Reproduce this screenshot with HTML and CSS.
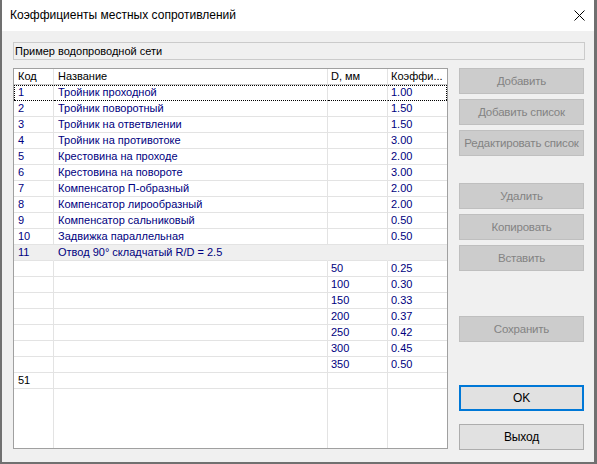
FILE: index.html
```html
<!DOCTYPE html>
<html>
<head>
    <meta charset="utf-8">
    <link rel="stylesheet" href="styles.css">
</head>
<body>
    <div class="window">
        <div class="titlebar">
            <span class="title">Коэффициенты местных сопротивлений</span>
            <svg class="close" width="11" height="11" viewBox="0 0 11 11">
                <path d="M0.5 0.5 L10.5 10.5 M10.5 0.5 L0.5 10.5" stroke="#000" stroke-width="1" fill="none"/>
            </svg>
        </div>
        <div class="content">
            <div class="caption-box">Пример водопроводной сети</div>
            <div class="main">
                <div class="grid">
                    <table>
                        <colgroup>
                            <col class="c-code">
                            <col class="c-name">
                            <col class="c-d">
                            <col class="c-k">
                        </colgroup>
                        <thead>
                            <tr><th>Код</th><th>Название</th><th>D, мм</th><th>Коэффи...</th></tr>
                        </thead>
                        <tbody>
                            <tr class="focus"><td>1</td><td>Тройник проходной</td><td></td><td>1.00</td></tr>
                            <tr><td>2</td><td>Тройник поворотный</td><td></td><td>1.50</td></tr>
                            <tr><td>3</td><td>Тройник на ответвлении</td><td></td><td>1.50</td></tr>
                            <tr><td>4</td><td>Тройник на противотоке</td><td></td><td>3.00</td></tr>
                            <tr><td>5</td><td>Крестовина на проходе</td><td></td><td>2.00</td></tr>
                            <tr><td>6</td><td>Крестовина на повороте</td><td></td><td>3.00</td></tr>
                            <tr><td>7</td><td>Компенсатор П-образный</td><td></td><td>2.00</td></tr>
                            <tr><td>8</td><td>Компенсатор лирообразный</td><td></td><td>2.00</td></tr>
                            <tr><td>9</td><td>Компенсатор сальниковый</td><td></td><td>0.50</td></tr>
                            <tr><td>10</td><td>Задвижка параллельная</td><td></td><td>0.50</td></tr>
                            <tr class="group"><td>11</td><td>Отвод 90° складчатый R/D = 2.5</td><td></td><td></td></tr>
                            <tr><td></td><td></td><td>50</td><td>0.25</td></tr>
                            <tr><td></td><td></td><td>100</td><td>0.30</td></tr>
                            <tr><td></td><td></td><td>150</td><td>0.33</td></tr>
                            <tr><td></td><td></td><td>200</td><td>0.37</td></tr>
                            <tr><td></td><td></td><td>250</td><td>0.42</td></tr>
                            <tr><td></td><td></td><td>300</td><td>0.45</td></tr>
                            <tr><td></td><td></td><td>350</td><td>0.50</td></tr>
                            <tr class="new"><td>51</td><td></td><td></td><td></td></tr>
                            <tr class="filler"><td></td><td></td><td></td><td></td></tr>
                        </tbody>
                    </table>
                </div>
                <div class="buttons">
                    <button class="btn" disabled>Добавить</button>
                    <button class="btn" disabled>Добавить список</button>
                    <button class="btn" disabled>Редактировать список</button>
                    <button class="btn sep-1" disabled>Удалить</button>
                    <button class="btn" disabled>Копировать</button>
                    <button class="btn" disabled>Вставить</button>
                    <button class="btn sep-2" disabled>Сохранить</button>
                    <button class="btn btn-ok">OK</button>
                    <button class="btn btn-exit">Выход</button>
                </div>
            </div>
        </div>
    </div>
</body>
</html>
```

FILE: styles.css
```css
html, body {
    margin: 0;
    padding: 0;
}

body {
    font-family: "Liberation Sans", Arial, sans-serif;
    font-size: 11px;
    color: #000;
    background-color: #707070;
}

.window {
    width: 592px;
    height: 462px;
    border-left: 2px solid #707070;
    border-right: 3px solid #707070;
    border-bottom: 2px solid #707070;
    background-color: #f0f0f0;
    display: flex;
    flex-direction: column;
}

.titlebar {
    height: 31px;
    background-color: #fff;
    display: flex;
    align-items: center;
    justify-content: space-between;
    padding: 0 8px 1px 8px;
    box-sizing: border-box;
}

.title {
    font-size: 12px;
    color: #000;
}

.close {
    margin-right: 1px;
}

.content {
    padding: 11px 9px 0 11px;
}

.caption-box {
    height: 16px;
    line-height: 16px;
    border: 1px solid #cbcbcb;
    background-color: #f0f0f0;
    padding-left: 1px;
    width: 569px;
}

.main {
    display: flex;
    margin-top: 8px;
}

.grid {
    width: 433px;
    height: 379px;
    border: 1px solid #a0a0a0;
    background-color: #fff;
    overflow: hidden;
}

table {
    border-collapse: separate;
    border-spacing: 0;
    table-layout: fixed;
    width: 433px;
    height: 379px;
}

.c-code { width: 40px; }
.c-name { width: 274px; }
.c-d { width: 60px; }
.c-k { width: 59px; }

th, td {
    height: 15px;
    line-height: 15px;
    padding: 0 0 0 4px;
    border-right: 1px solid #e3e3e3;
    border-bottom: 1px solid #e3e3e3;
    text-align: left;
    font-weight: normal;
    white-space: nowrap;
    overflow: hidden;
    color: #000080;
}

th {
    color: #000;
    border-bottom-color: #c8c8c8;
}

th:nth-child(3), td:nth-child(3),
th:nth-child(4), td:nth-child(4) {
    padding-left: 3px;
}

th:last-child, td:last-child {
    border-right: none;
}

tr.focus td {
    position: relative;
    border-bottom: 1px dotted #000;
}

tr.focus td::after {
    content: "";
    position: absolute;
    left: 0;
    right: 0;
    top: 0;
    border-top: 1px dotted #000;
}

tr.focus td:first-child::after {
    bottom: 0;
    border-left: 1px dotted #000;
}

tr.focus td:last-child::after {
    bottom: 0;
    border-right: 1px dotted #000;
}

tr.group td {
    background-color: #efefef;
    border-right-color: #efefef;
}

tr.new td {
    color: #000;
}

tr.filler td {
    height: auto;
    border-bottom: none;
}

.buttons {
    display: flex;
    flex-direction: column;
    margin-left: 11px;
    width: 125px;
}

.btn {
    height: 26px;
    margin: 0 0 5px 0;
    padding: 0;
    font-family: "Liberation Sans", Arial, sans-serif;
    font-size: 11.5px;
    letter-spacing: -0.2px;
    color: #000;
    background-color: #e1e1e1;
    border: 1px solid #adadad;
    white-space: nowrap;
}

.btn:disabled {
    background-color: #cccccc;
    border-color: #bfbfbf;
    color: #838383;
}

.sep-1 {
    margin-top: 22px;
}

.sep-2 {
    margin-top: 40px;
}

.btn-ok {
    margin-top: 38px;
    border: 2px solid #0078d7;
    margin-bottom: 13px;
    font-size: 12px;
}

.btn-exit {
    font-size: 12px;
}
```
